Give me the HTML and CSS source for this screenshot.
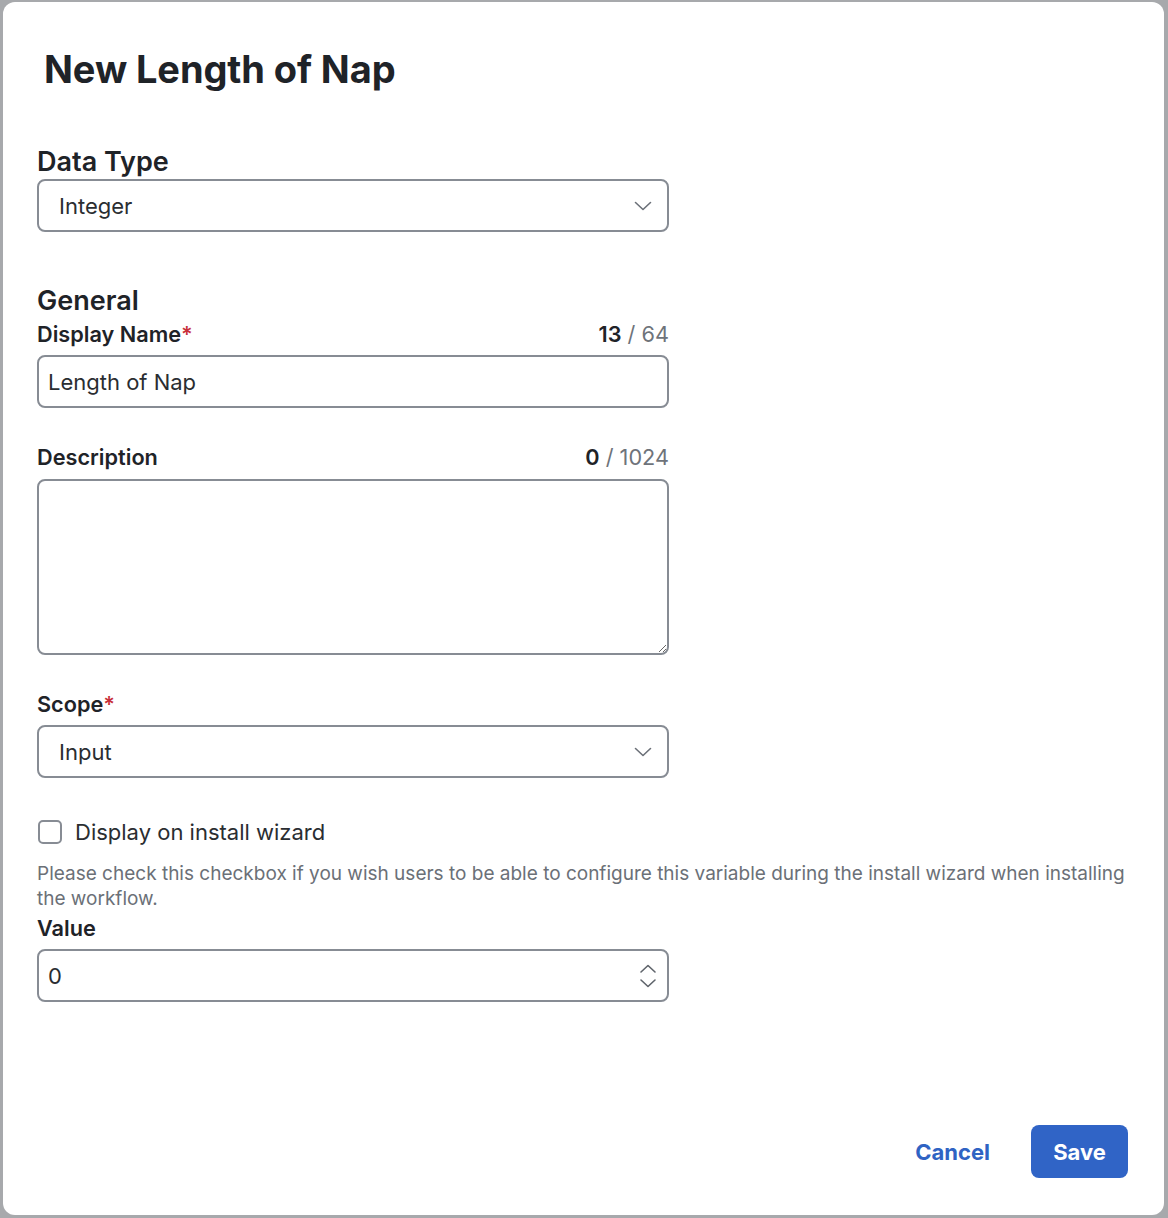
FILE: index.html
```html
<!DOCTYPE html>
<html lang="en">
<head>
<meta charset="utf-8">
<title>New Length of Nap</title>
<link rel="stylesheet" href="styles.css">
</head>
<body>
<div class="dialog">
  <h1 class="title">New Length of Nap</h1>
  <div class="form">
    <h2 class="section">Data Type</h2>
    <div class="box select">
      <span class="select-text">Integer</span>
      <svg class="chev" width="18" height="10" viewBox="0 0 18 10"><path d="M1.5 1.5 L9 8.5 L16.5 1.5" fill="none" stroke="#6b7078" stroke-width="1.6" stroke-linecap="round" stroke-linejoin="round"/></svg>
    </div>

    <h2 class="section general">General</h2>
    <div class="label-row first">
      <span class="label">Display Name<span class="req">*</span></span>
      <span class="count"><b>13</b> / 64</span>
    </div>
    <div class="box textbox"><span class="val">Length of Nap</span></div>

    <div class="label-row spaced">
      <span class="label">Description</span>
      <span class="count"><b>0</b> / 1024</span>
    </div>
    <textarea class="area"></textarea>

    <div class="label-row spaced">
      <span class="label">Scope<span class="req">*</span></span>
    </div>
    <div class="box select">
      <span class="select-text">Input</span>
      <svg class="chev" width="18" height="10" viewBox="0 0 18 10"><path d="M1.5 1.5 L9 8.5 L16.5 1.5" fill="none" stroke="#6b7078" stroke-width="1.6" stroke-linecap="round" stroke-linejoin="round"/></svg>
    </div>

    <label class="check-row">
      <span class="checkbox"></span>
      <span class="check-label">Display on install wizard</span>
    </label>
  </div>
  <p class="help">Please check this checkbox if you wish users to be able to configure this variable during the install wizard when installing the workflow.</p>
  <div class="form">
    <div class="label-row value-row">
      <span class="label">Value</span>
    </div>
    <div class="box textbox number">
      <span class="val">0</span>
      <svg class="spin" width="18" height="26" viewBox="0 0 18 26"><path d="M2 9 L9 2.5 L16 9 M2 17 L9 23.5 L16 17" fill="none" stroke="#5f646b" stroke-width="1.6" stroke-linecap="round" stroke-linejoin="round"/></svg>
    </div>
  </div>
  <div class="spacer"></div>
  <div class="footer">
    <button class="btn-link">Cancel</button>
    <button class="btn-primary">Save</button>
  </div>
</div>
</body>
</html>
```
FILE: styles.css
```css
html, body {
  margin: 0;
  padding: 0;
}
body {
  background: #a7a9ac;
  font-family: Inter, "Noto Sans", "Liberation Sans", sans-serif;
  color: #1f2328;
}
.dialog {
  box-sizing: border-box;
  margin: 2px 4px 3px 3px;
  height: 1213px;
  background: #ffffff;
  border-radius: 12px;
  display: flex;
  flex-direction: column;
  padding: 0 36px 37px 34px;
}
.title {
  margin: 45px 0 0 7px;
  font-size: 38px;
  line-height: 44px;
  font-weight: 700;
  color: #1f2328;
  letter-spacing: -0.1px;
}
.form {
  width: 632px;
  display: flex;
  flex-direction: column;
}
.section {
  margin: 57px 0 0 0;
  font-size: 27px;
  line-height: 28px;
  font-weight: 600;
  color: #1f2328;
}
.section.general {
  margin-top: 55px;
}
.box {
  box-sizing: border-box;
  height: 53px;
  border: 2px solid #878c94;
  border-radius: 8px;
  display: flex;
  align-items: center;
  background: #fff;
}
.select {
  margin-top: 3px;
  padding: 0 15px 0 20px;
  justify-content: space-between;
}
.select-text, .val, .check-label {
  font-size: 22px;
  color: #2a2d31;
}
.chev {
  margin-top: 1px;
}
.label-row {
  display: flex;
  justify-content: space-between;
  align-items: center;
  height: 26px;
}
.label-row.first {
  margin-top: 6px;
}
.label-row.spaced {
  margin-top: 36px;
}
.label {
  font-size: 21.7px;
  font-weight: 600;
  color: #1f2328;
}
.req {
  color: #c8303a;
}
.count {
  font-size: 21.7px;
  color: #6e737a;
}
.count b {
  color: #1f2328;
  font-weight: 600;
}
.textbox {
  margin-top: 8px;
  padding: 0 9px;
}
.area {
  box-sizing: border-box;
  margin-top: 9px;
  height: 176px;
  width: 632px;
  border: 2px solid #878c94;
  border-radius: 8px;
  resize: both;
  outline: none;
  font-family: inherit;
}
.label-row + .select {
  margin-top: 8px;
}
.check-row {
  margin-top: 41px;
  display: flex;
  align-items: center;
  gap: 13px;
  margin-left: 1px;
}
.checkbox {
  box-sizing: border-box;
  width: 24px;
  height: 24px;
  border: 2px solid #878c94;
  border-radius: 5px;
}
.help {
  margin: 16px 0 0 0;
  font-size: 19px;
  line-height: 25px;
  color: #6b7077;
  max-width: 1095px;
}
.value-row {
  margin-top: 4px;
}
.number {
  justify-content: space-between;
  padding-right: 10px;
}
.spacer {
  flex: 1;
}
.footer {
  display: flex;
  justify-content: flex-end;
  align-items: center;
  gap: 41px;
}
.btn-link {
  background: none;
  border: none;
  font-family: inherit;
  font-size: 22px;
  font-weight: 700;
  color: #2f63c3;
  padding: 0;
}
.btn-primary {
  width: 97px;
  height: 53px;
  border: none;
  border-radius: 8px;
  background: #3064c6;
  color: #ffffff;
  font-family: inherit;
  font-size: 22px;
  font-weight: 700;
}
```
